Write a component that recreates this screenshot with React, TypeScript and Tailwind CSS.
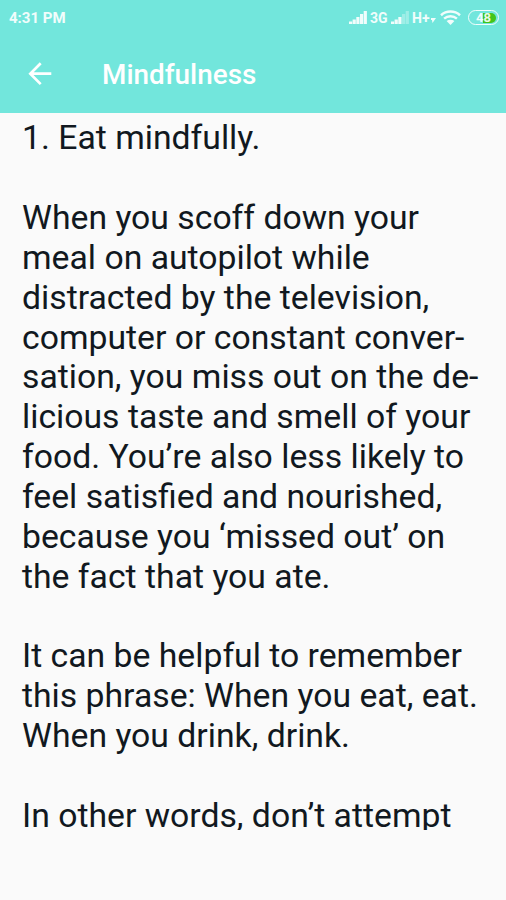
const paragraphs = [
  ["1. Eat mindfully."],
  [
    "When you scoff down your",
    "meal on autopilot while",
    "distracted by the television,",
    "computer or constant conver-",
    "sation, you miss out on the de-",
    "licious taste and smell of your",
    "food. You’re also less likely to",
    "feel satisfied and nourished,",
    "because you ‘missed out’ on",
    "the fact that you ate.",
  ],
  [
    "It can be helpful to remember",
    "this phrase: When you eat, eat.",
    "When you drink, drink.",
  ],
  ["In other words, don’t attempt"],
];

function SignalIcon({ weak = false }: { weak?: boolean }) {
  return (
    <svg className="h-[13px] w-[18px] shrink-0" viewBox="0 0 18 13" fill="currentColor">
      <rect x="0" y="10.5" width="3.2" height="2.5" />
      <rect x="3.6" y="8.5" width="3.2" height="4.5" />
      <rect x="7.3" y="6" width="3.2" height="7" />
      <rect x="11" y="3" width="3.2" height="10" opacity={weak ? 0.35 : 1} />
      <rect x="14.7" y="0" width="3.2" height="13" opacity={weak ? 0.35 : 1} />
    </svg>
  );
}

function WifiIcon() {
  return (
    <svg className="h-[15px] w-[21px] shrink-0" viewBox="0 0 21 15" fill="none" stroke="currentColor" strokeWidth="2.5">
      <path d="M1 5.2C6.4.4 14.6.4 20 5.2" />
      <path d="M4.1 8.6c3.7-3.2 9.1-3.2 12.8 0" />
      <path d="M10.5 15 6.6 11c2.2-1.7 5.6-1.7 7.8 0Z" fill="currentColor" stroke="none" />
    </svg>
  );
}

function BatteryIcon() {
  return (
    <div className="relative h-[15px] w-[31px] shrink-0 rounded-full border-[1.5px] border-white/90">
      <div className="absolute top-[1.5px] right-[2px] h-[10px] w-[13px] rounded-r-full bg-[#43c51b]" />
      <span className="absolute inset-0 flex items-center justify-center text-[13px] leading-none font-bold">
        48
      </span>
    </div>
  );
}

function StatusBar() {
  return (
    <div className="flex h-[36px] items-center justify-between pr-[7px] pl-[9px] text-white/90">
      <span className="mt-px text-[15px] leading-none font-bold">4:31 PM</span>
      <div className="-mt-px flex items-center text-[14px] leading-none font-bold">
        <SignalIcon />
        <span className="ml-[3px] w-[18px]">3G</span>
        <span className="ml-[3px] flex">
          <SignalIcon weak />
        </span>
        <span className="ml-[3px] w-[18px]">H+</span>
        <svg className="mt-[5px] h-[6px] w-[6px]" viewBox="0 0 6 6" fill="currentColor">
          <path d="M1 1h5L2.5 6 2 3H1Z" />
        </svg>
        <span className="ml-[4px] flex">
          <WifiIcon />
        </span>
        <span className="ml-[7px] flex">
          <BatteryIcon />
        </span>
      </div>
    </div>
  );
}

function AppBar() {
  return (
    <div className="flex h-[77px] items-center pl-[28px] text-white">
      <button type="button" aria-label="Back" className="-mt-[2px] flex">
        <svg className="h-[24px] w-[24px]" viewBox="0 0 24 24" fill="none" stroke="currentColor" strokeWidth="2.7">
          <path d="M23.3 11.7H3M12.7 1.3 2.3 11.7 12.7 22.1" />
        </svg>
      </button>
      <h1 className="mt-px ml-[50px] text-[27.9px] leading-none font-medium">Mindfulness</h1>
    </div>
  );
}

export default function App() {
  return (
    <div className="flex h-[900px] w-[506px] flex-col overflow-hidden bg-[#fafafa] font-['Roboto','Liberation_Sans',sans-serif]">
      <header className="shrink-0 bg-[#72e6dc]">
        <StatusBar />
        <AppBar />
      </header>
      <main className="h-[717px] shrink-0 space-y-[39.84px] overflow-hidden pt-[5.4px] pl-[22px] text-[33.74px] leading-[39.84px] text-[#111820]">
        {paragraphs.map((lines) => (
          <p key={lines[0]}>
            {lines.map((line) => (
              <span key={line} className="block whitespace-nowrap">
                {line}
              </span>
            ))}
          </p>
        ))}
      </main>
    </div>
  );
}
